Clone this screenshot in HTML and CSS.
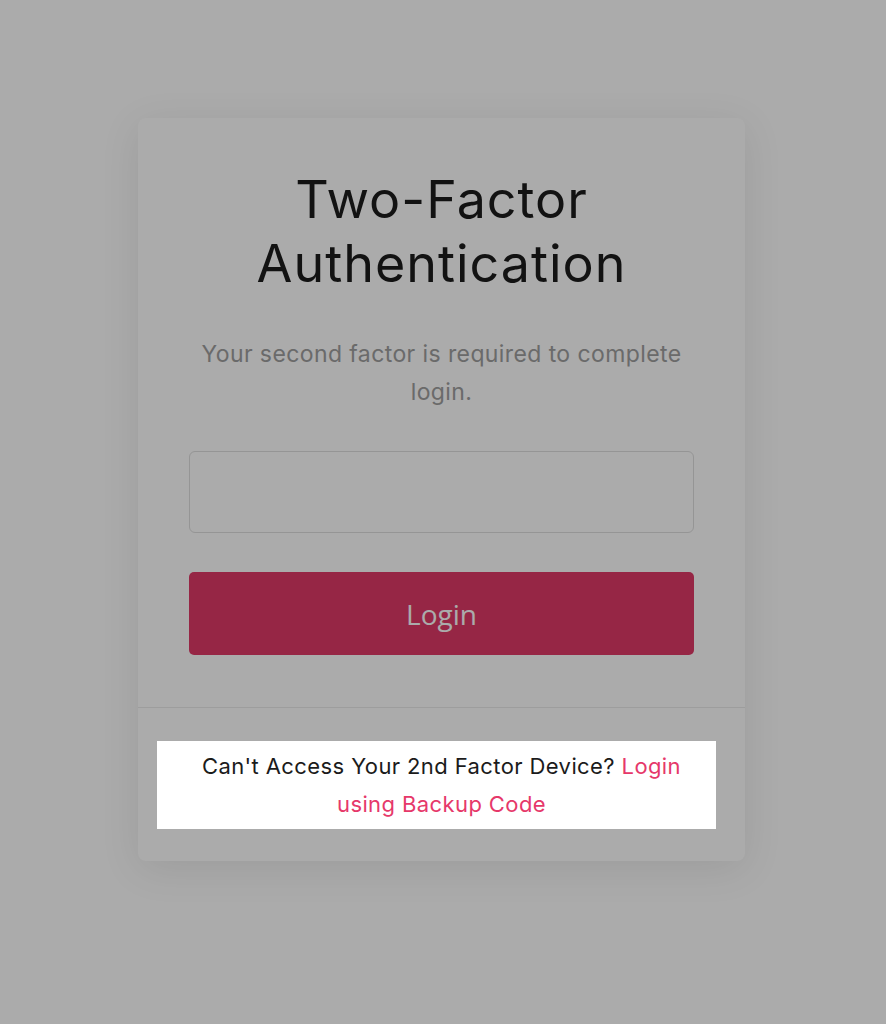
FILE: index.html
```html
<!DOCTYPE html>
<html lang="en">
  <head>
    <meta charset="UTF-8" />
    <meta name="viewport" content="width=device-width, initial-scale=1.0" />
    <title>Two-Factor Authentication</title>
    <link rel="stylesheet" href="styles.css">
  </head>
  <body>
    <div class="page">
      <div class="card">
        <form class="card-body" id="twoFactorForm">
          <h1 class="title">Two-Factor Authentication</h1>
          <p class="subtitle">Your second factor is required to complete login.</p>

          <input type="text" class="code-input" name="code" autocomplete="one-time-code" />

          <button type="button" class="btn-login">Login</button>
        </form>

        <div class="card-footer">
          <div class="tour-highlight">
            <p class="backup">
              Can't Access Your 2nd Factor Device?
              <a href="#" class="backup-link">Login using Backup Code</a>
            </p>
          </div>
        </div>
      </div>
    </div>
  </body>
</html>
```

FILE: styles.css
```css
html,
body {
  margin: 0;
  padding: 0;
  background-color: #ffffff;
  font-family: Inter, "Noto Sans", sans-serif;
}

.page {
  display: flex;
  justify-content: center;
  padding: 118px 3px 0 0;
  min-height: 1024px;
  box-sizing: border-box;
}

.card {
  width: 607px;
  height: 743px;
  background-color: #ffffff;
  border-radius: 8px;
  box-shadow: 0 8px 40px rgba(0, 0, 0, 0.09);
  display: flex;
  flex-direction: column;
}

.card-body {
  padding: 50px 51px 52px;
  text-align: center;
}

.title {
  margin: 0;
  font-size: 52px;
  font-weight: 400;
  line-height: 64px;
  color: #1b1b1b;
  letter-spacing: 1px;
}

.subtitle {
  margin: 39px 0 40px;
  padding: 0 10px;
  font-size: 23px;
  line-height: 38px;
  letter-spacing: 0.4px;
  color: #9e9e9e;
}

.code-input {
  display: block;
  width: 100%;
  height: 82px;
  box-sizing: border-box;
  border: 1.5px solid #dedede;
  border-radius: 6px;
  background: #ffffff;
}

.btn-login {
  display: block;
  width: 100%;
  height: 83px;
  margin-top: 39px;
  border: none;
  border-radius: 5px;
  background-color: #e03967;
  color: #ffffff;
  font-family: "Open Sans", sans-serif;
  font-size: 28px;
}

.card-footer {
  border-top: 1.5px solid #ebebeb;
  padding: 33px 29px 32px 19px;
}

/* tour step: the highlighted block with the dimmed page around it */
.tour-highlight {
  position: relative;
  z-index: 10;
  background-color: #ffffff;
  padding: 6px 10px;
  box-shadow: 0 0 0 3000px rgba(0, 0, 0, 0.33);
}

.backup {
  margin: 0;
  padding-left: 10px;
  text-align: center;
  font-size: 22px;
  line-height: 38px;
  letter-spacing: 0.4px;
  color: #1b1b1b;
}

.backup-link {
  color: #e6386a;
  text-decoration: none;
}
```
